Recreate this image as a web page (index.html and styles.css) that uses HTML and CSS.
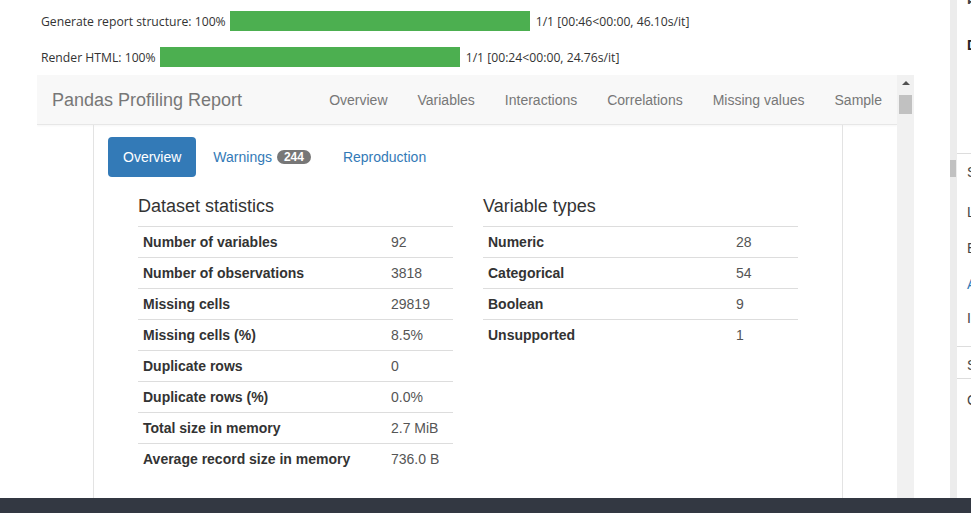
FILE: index.html
```html
<!DOCTYPE html>
<html>
<head>
<meta charset="utf-8">
<link rel="stylesheet" href="styles.css">
</head>
<body>
<div class="page">
  <div class="top">
    <div class="main">
      <div class="progress">
        <div class="prow">
          <span class="plabel">Generate report structure: 100%</span>
          <span class="bar"></span>
          <span class="pinfo">1/1 [00:46&lt;00:00, 46.10s/it]</span>
        </div>
        <div class="prow">
          <span class="plabel">Render HTML: 100%</span>
          <span class="bar"></span>
          <span class="pinfo">1/1 [00:24&lt;00:00, 24.76s/it]</span>
        </div>
      </div>
      <div class="frame">
        <div class="frame-content">
          <nav class="navbar">
            <span class="brand">Pandas Profiling Report</span>
            <ul class="navlinks">
              <li>Overview</li>
              <li>Variables</li>
              <li>Interactions</li>
              <li>Correlations</li>
              <li>Missing values</li>
              <li>Sample</li>
            </ul>
          </nav>
          <div class="container">
            <ul class="pills">
              <li class="pill active">Overview</li>
              <li class="pill">Warnings <span class="badge">244</span></li>
              <li class="pill">Reproduction</li>
            </ul>
            <div class="stats">
              <div class="col">
                <p class="heading">Dataset statistics</p>
                <table class="tbl">
                  <tr><th>Number of variables</th><td>92</td></tr>
                  <tr><th>Number of observations</th><td>3818</td></tr>
                  <tr><th>Missing cells</th><td>29819</td></tr>
                  <tr><th>Missing cells (%)</th><td>8.5%</td></tr>
                  <tr><th>Duplicate rows</th><td>0</td></tr>
                  <tr><th>Duplicate rows (%)</th><td>0.0%</td></tr>
                  <tr><th>Total size in memory</th><td>2.7 MiB</td></tr>
                  <tr><th>Average record size in memory</th><td>736.0 B</td></tr>
                </table>
              </div>
              <div class="col">
                <p class="heading">Variable types</p>
                <table class="tbl">
                  <tr><th>Numeric</th><td>28</td></tr>
                  <tr><th>Categorical</th><td>54</td></tr>
                  <tr><th>Boolean</th><td>9</td></tr>
                  <tr><th>Unsupported</th><td>1</td></tr>
                </table>
              </div>
            </div>
          </div>
        </div>
        <div class="vscroll">
          <span class="arrow-up"></span>
          <span class="vthumb"></span>
        </div>
      </div>
    </div>
    <div class="strip"><span class="sthumb"></span></div>
    <div class="side">
      <div class="s-text s-first">E</div>
      <div class="s-text s-bold">D</div>
      <div class="s-sep s-sep1"></div>
      <div class="s-text s-m8">S</div>
      <div class="s-text s-m20">L</div>
      <div class="s-text s-m16">E</div>
      <div class="s-text s-m16 s-link">A</div>
      <div class="s-text s-m14">I</div>
      <div class="s-sep s-sep2"></div>
      <div class="s-text s-m8">S</div>
      <div class="s-sep s-sep3"></div>
      <div class="s-text s-m11">C</div>
    </div>
  </div>
  <div class="footer"></div>
</div>
</body>
</html>
```

FILE: styles.css
```css
* { box-sizing: border-box; }
html, body { margin: 0; padding: 0; background: #fff; }
body { width: 971px; height: 513px; overflow: hidden; font-family: "Liberation Sans", Arial, sans-serif; color: #333; }

.page { display: flex; flex-direction: column; height: 513px; }
.top { display: flex; height: 498px; }
.main { width: 950px; padding-left: 37px; }

/* progress output */
.progress { padding-top: 11px; padding-left: 4px; display: flex; flex-direction: column; gap: 16px; }
.prow { display: flex; align-items: center; height: 20px; font-family: "Open Sans", "Noto Sans", sans-serif; font-size: 12.2px; color: #333; }
.bar { width: 300px; height: 20px; background: #4caf50; margin: 0 6px 0 4px; }

/* iframe */
.frame { display: flex; margin-top: 8px; height: 423px; width: 877px; }
.frame-content { width: 860px; height: 423px; overflow: hidden; }
.vscroll { width: 17px; background: #f1f1f1; display: flex; flex-direction: column; align-items: center; padding-top: 6px; }
.arrow-up { width: 0; height: 0; border-left: 4px solid transparent; border-right: 4px solid transparent; border-bottom: 4px solid #505050; }
.vthumb { width: 13px; height: 19px; background: #c1c1c1; margin-top: 10px; }

.navbar { height: 50px; background: #f8f8f8; border-bottom: 1px solid #e7e7e7; box-shadow: 0 1px 2px rgba(0,0,0,0.04); display: flex; align-items: flex-start; justify-content: space-between; }
.brand { padding: 15px; font-size: 18px; line-height: 20px; color: #777; }
.navlinks { list-style: none; margin: 0; padding: 0; display: flex; }
.navlinks li { padding: 15px; font-size: 14px; line-height: 20px; color: #777; }

.container { width: 750px; margin-left: 56px; height: 373px; border-left: 1px solid #e3e3e3; border-right: 1px solid #e3e3e3; padding: 12px 14px 0; }
.pills { list-style: none; margin: 0; padding: 0; display: flex; gap: 2px; }
.pill { padding: 10px 15px; font-size: 14px; line-height: 20px; color: #337ab7; border-radius: 4px; }
.pill.active { background: #337ab7; color: #fff; }
.badge { display: inline-block; padding: 1px 7px; font-size: 12px; font-weight: bold; line-height: 12px; color: #fff; background: #777; border-radius: 10px; vertical-align: 1px; margin-left: 1px; }

.stats { display: grid; grid-template-columns: 315px 315px; column-gap: 30px; padding-left: 30px; margin-top: 19px; }
.heading { margin: 0 0 10px; font-size: 18px; line-height: 20px; color: #333; }
.tbl { width: 315px; border-collapse: collapse; font-size: 14px; }
.tbl th, .tbl td { padding: 5px; line-height: 20px; border-top: 1px solid #ddd; text-align: left; }
.tbl th { width: 248px; font-weight: bold; color: #333; }
.tbl td { color: #555; }

/* right edge */
.strip { width: 7px; background: #ececec; padding-top: 160px; }
.sthumb { display: block; width: 6px; height: 17px; background: #c1c1c1; }
.side { width: 14px; overflow: hidden; font-size: 14px; line-height: 20px; color: #444; white-space: nowrap; }
.s-text { height: 20px; padding-left: 10px; }
.s-first { height: 4px; line-height: 4px; overflow: hidden; font-weight: bold; }
.s-bold { margin-top: 31px; font-weight: bold; color: #222; }
.s-sep { border-top: 1px solid #ddd; }
.s-sep1 { margin-top: 98px; }
.s-sep2 { margin-top: 18px; }
.s-sep3 { margin-top: 3px; }
.s-m8 { margin-top: 8px; }
.s-m11 { margin-top: 11px; }
.s-m14 { margin-top: 14px; }
.s-m16 { margin-top: 16px; }
.s-m20 { margin-top: 20px; }
.s-link { color: #337ab7; }

.footer { height: 15px; background: #333842; }
```
